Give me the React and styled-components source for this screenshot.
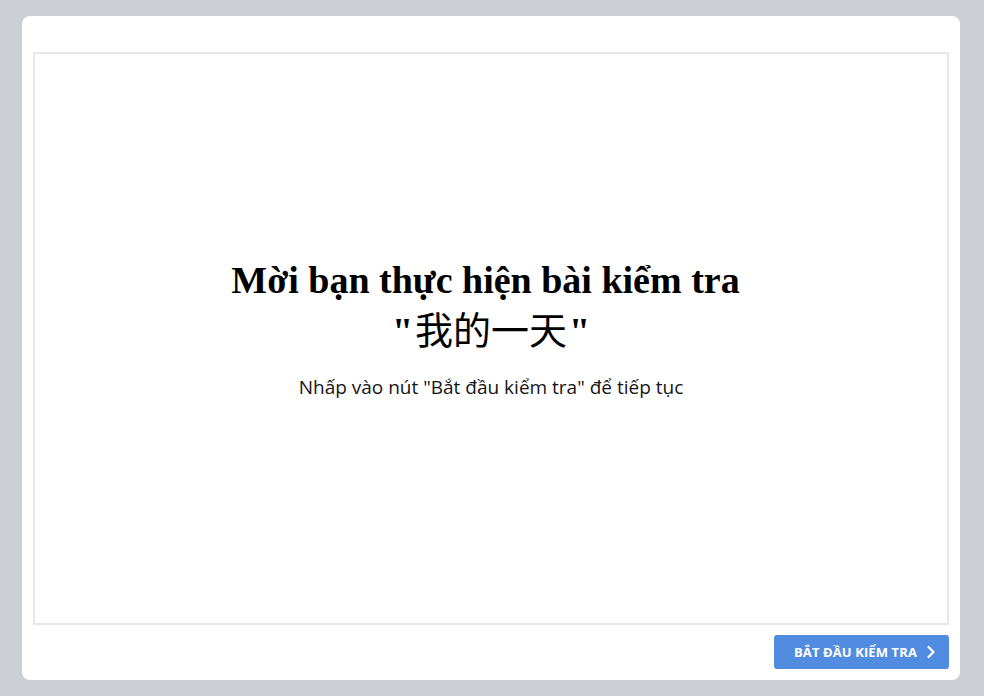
import React from 'react';
import styled, { createGlobalStyle } from 'styled-components';

const GlobalStyle = createGlobalStyle`
  html, body {
    margin: 0;
    padding: 0;
    background: #ccd0d4;
  }
  * {
    box-sizing: border-box;
  }
`;

const Page = styled.div`
  width: 984px;
  height: 696px;
  padding: 16px 24px 16px 22px;
`;

const Card = styled.div`
  height: 100%;
  background: #fff;
  border-radius: 8px;
  padding: 36px 11px 11px 11px;
  display: flex;
  flex-direction: column;
  gap: 10px;
`;

const Stage = styled.div`
  flex: 1;
  border: 2px solid #e8e8e8;
  display: flex;
  flex-direction: column;
  align-items: center;
  justify-content: center;
  text-align: center;
  padding-bottom: 23px;
`;

const Title = styled.h1`
  margin: 0;
  padding-right: 11px;
  font-family: 'Liberation Serif', 'Noto Sans CJK SC', serif;
  font-size: 38px;
  font-weight: bold;
  line-height: 52px;
  color: #000;
`;

const Quote = styled.div`
  font-family: 'Liberation Serif', 'Noto Sans CJK SC', serif;
  font-size: 38px;
  line-height: 50px;
  color: #000;
  & > b {
    font-weight: bold;
    padding: 0 2px;
  }
`;

const Hint = styled.p`
  margin: 18px 0 0;
  font-family: 'Open Sans', sans-serif;
  font-size: 19px;
  line-height: 26px;
  color: #151515;
`;

const Footer = styled.div`
  display: flex;
  justify-content: flex-end;
`;

const StartBtn = styled.button`
  height: 34px;
  width: 175px;
  border: none;
  border-radius: 3px;
  background: #528ce0;
  color: #fff;
  font-family: 'Open Sans', sans-serif;
  font-weight: bold;
  font-size: 13px;
  letter-spacing: 0.1px;
  display: flex;
  align-items: center;
  justify-content: center;
  gap: 7px;
  padding: 0 0 0 9px;
  cursor: pointer;
  & > svg {
    width: 14px;
    height: 14px;
  }
`;

const App = () => {
  return (
    <>
      <GlobalStyle />
      <Page>
        <Card>
          <Stage>
            <Title>Mời bạn thực hiện bài kiểm tra</Title>
            <Quote>
              <b>"</b>我的一天<b>"</b>
            </Quote>
            <Hint>Nhấp vào nút "Bắt đầu kiểm tra" để tiếp tục</Hint>
          </Stage>
          <Footer>
            <StartBtn type="button">
              BẮT ĐẦU KIỂM TRA
              <svg viewBox="0 0 14 14" fill="none" stroke="#fff" strokeWidth="2.2" strokeLinecap="round" strokeLinejoin="round">
                <polyline points="4.5,2 9.5,7 4.5,12" />
              </svg>
            </StartBtn>
          </Footer>
        </Card>
      </Page>
    </>
  );
};

export default App;
